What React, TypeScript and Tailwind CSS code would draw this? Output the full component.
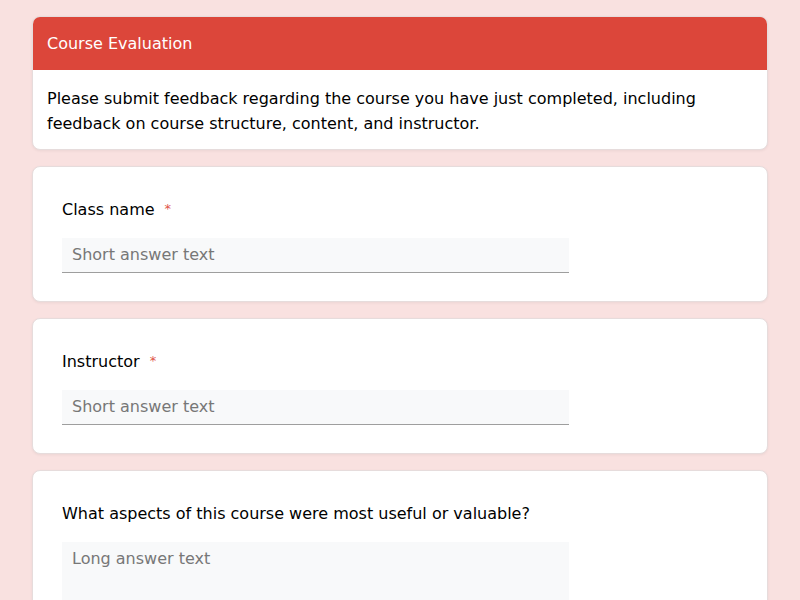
import React from "react";

function Question({ label, required, long }: { label: string; required?: boolean; long?: boolean }) {
  return (
    <div className="shrink-0 bg-white rounded-lg border border-[#e6dcdc] shadow-[0_1px_3px_rgba(0,0,0,0.06)] px-[29px] pt-[31px] pb-[28px]">
      <div className="flex items-center h-[24px] text-[16px] text-black leading-[24px]">
        <span>{label}</span>
        {required && <span className="ml-[10px] text-[#e0554a] text-[13px] leading-none -mt-[3px]">*</span>}
      </div>
      <div
        className={`mt-[16px] w-3/4 bg-[#f8f9fa] border-b border-[#9e9e9e] px-[10px] text-[16px] text-[#777] ${long ? "h-[120px] pt-[5px]" : "h-[35px] flex items-center"}`}
      >
        {long ? "Long answer text" : "Short answer text"}
      </div>
    </div>
  );
}

export default function App() {
  return (
    <div
      className="h-[600px] overflow-hidden bg-[#f9e1e0] px-[32px] pt-[16px] flex flex-col gap-[16px]"
      style={{ fontFamily: '"DejaVu Sans", "Noto Sans", sans-serif' }}
    >
      <div className="shrink-0 bg-white rounded-lg overflow-hidden border border-[#e6dcdc] shadow-[0_1px_3px_rgba(0,0,0,0.06)]">
        <div className="bg-[#dc463a] text-white text-[16px] leading-[24px] px-[14px] pt-[15px] pb-[14px]">Course Evaluation</div>
        <div className="px-[14px] pt-[16px] pb-[13px] text-[16px] leading-[25px] text-black">
          Please submit feedback regarding the course you have just completed, including feedback on course structure, content, and instructor.
        </div>
      </div>
      <Question label="Class name" required />
      <Question label="Instructor" required />
      <Question label="What aspects of this course were most useful or valuable?" long />
    </div>
  );
}
